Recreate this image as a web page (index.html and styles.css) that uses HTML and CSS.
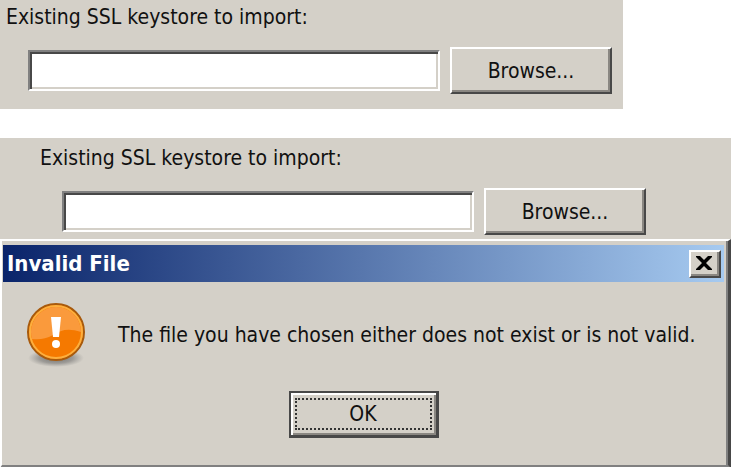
FILE: index.html
```
<!DOCTYPE html>
<html lang="en">
<head>
<meta charset="UTF-8">
<meta name="viewport" content="width=device-width, initial-scale=1.0">
<title>SSL keystore</title>
<link rel="stylesheet" href="styles.css">
</head>
<body>

<form class="panel panel-first">
    <label for="keystore1">Existing SSL keystore to import:</label>
    <div class="field-row">
        <input type="text" id="keystore1" class="field">
        <button type="button" class="button">Browse...</button>
    </div>
</form>

<form class="panel panel-second">
    <label for="keystore2">Existing SSL keystore to import:</label>
    <div class="field-row">
        <input type="text" id="keystore2" class="field">
        <button type="button" class="button">Browse...</button>
    </div>
</form>

<div class="dialog" role="alertdialog" aria-labelledby="dialogTitle" aria-describedby="dialogMessage">
    <div class="title-bar">
        <h1 id="dialogTitle">Invalid File</h1>
        <button type="button" class="close" aria-label="Close">
            <svg width="18" height="16" viewBox="0 0 18 16">
                <path d="M1 1h4l4 4 4-4h4v1l-6 6 6 6v1h-4l-4-4-4 4H1v-1l6-6-6-6z"/>
            </svg>
        </button>
    </div>
    <div class="message">
        <svg class="icon" width="64" height="68" viewBox="0 0 64 68">
            <defs>
                <radialGradient id="shadow">
                    <stop offset="0" stop-color="#555" stop-opacity=".8"/>
                    <stop offset=".6" stop-color="#666" stop-opacity=".5"/>
                    <stop offset="1" stop-color="#777" stop-opacity="0"/>
                </radialGradient>
            </defs>
            <ellipse cx="32" cy="57" rx="28" ry="9" fill="url(#shadow)"/>
            <circle cx="32" cy="31" r="28" fill="#f57900" stroke="#a85a0c" stroke-width="2"/>
            <circle cx="32" cy="31" r="26" fill="none" stroke="#fcaf3e" stroke-width="2"/>
            <path d="M8 38a25 25 0 1 1 49-7C44 27 37 29 29 34 22 38 15 39 8 38z" fill="#fa9a3c"/>
            <path d="M27 16h10l-2 20h-6z" fill="#fff"/>
            <circle cx="32" cy="43" r="4" fill="#fff"/>
        </svg>
        <p id="dialogMessage">The file you have chosen either does not exist or is not valid.</p>
    </div>
    <button type="button" class="ok"><span>OK</span></button>
</div>

</body>
</html>
```
FILE: styles.css
```
* {
    box-sizing: border-box;
}
body {
    margin: 0;
    background-color: #fff;
    color: #111;
    font-family: Tahoma, "DejaVu Sans Condensed", "Noto Sans", sans-serif;
    font-size: 21px;
    line-height: 24px;
}
button, input {
    font: inherit;
    color: inherit;
}
.panel {
    background-color: #d4d0c8;
}
.panel-first {
    margin-right: 108px;
    padding: 5px 11px 15px 6px;
}
.panel-second {
    margin-top: 29px;
    padding: 8px 85px 4px 40px;
}
.panel label {
    display: block;
}
.field-row {
    display: flex;
    align-items: center;
    gap: 10px;
    margin-top: 18px;
    padding-left: 22px;
}
.field {
    flex: 1;
    min-width: 0;
    height: 41px;
    padding: 0 6px;
    background-color: #fff;
    border: 2px solid;
    border-color: #808080 #fff #fff #808080;
    box-shadow: inset 2px 2px #484848, inset -2px -2px #d4d0c8;
}
.button {
    width: 162px;
    height: 47px;
    padding: 0;
    background-color: #d4d0c8;
    border: 2px solid;
    border-color: #fff #484848 #484848 #fff;
    box-shadow: inset -2px -2px #8a8782;
}
.dialog {
    background-color: #d4d0c8;
    border: 2px solid;
    border-color: #fff #484848 #808080 #fff;
    border-right-width: 3px;
    border-bottom-width: 3px;
    box-shadow: inset -2px 0 #808080;
    padding: 4px 4px 27px 1px;
}
.title-bar {
    display: flex;
    align-items: center;
    justify-content: space-between;
    height: 37px;
    padding: 0 3px 0 4px;
    background: linear-gradient(to right, #0a246a, #a6caf0);
}
.title-bar h1 {
    margin: 0;
    color: #fff;
    font-size: 22px;
}
.close {
    display: flex;
    align-items: center;
    justify-content: center;
    width: 32px;
    height: 28px;
    padding: 0 2px 2px 0;
    background-color: #d4d0c8;
    border: 2px solid;
    border-color: #fff #484848 #484848 #fff;
    box-shadow: inset -2px -2px #8a8782;
}
.message {
    display: flex;
    align-items: center;
    gap: 30px;
    margin-top: 19px;
    padding-left: 21px;
}
.icon {
    flex: none;
}
.message p {
    margin: 0;
}
.ok {
    display: block;
    width: 150px;
    height: 47px;
    margin: 22px auto 0;
    padding: 4px;
    background-color: #d4d0c8;
    border: 2px solid #484848;
    border-right-width: 3px;
    border-bottom-width: 3px;
    box-shadow: inset 2px 2px #fff, inset -2px -2px #8a8782;
}
.ok span {
    display: block;
    height: 32px;
    line-height: 28px;
    border: 2px dotted #333;
}
```
